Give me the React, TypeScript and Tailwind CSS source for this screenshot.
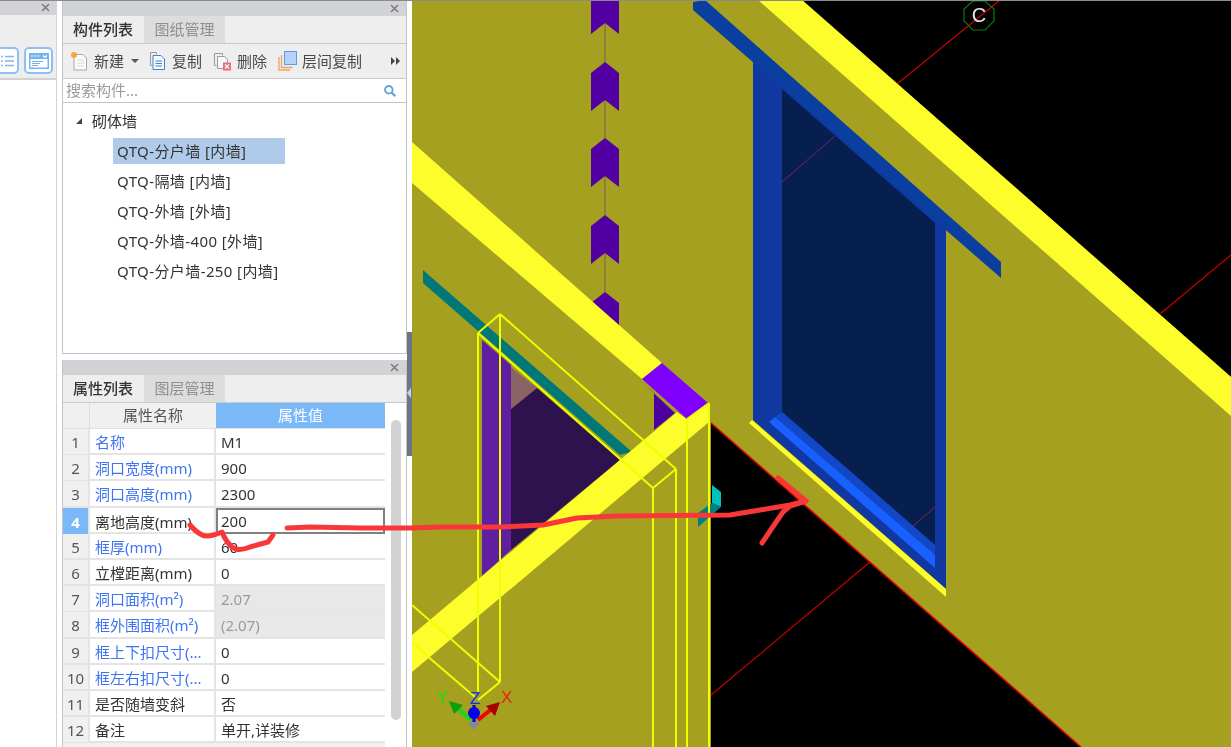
import React from 'react';

const rows = [
  { name: '名称', value: 'M1', blue: true },
  { name: '洞口宽度(mm)', value: '900', blue: true },
  { name: '洞口高度(mm)', value: '2300', blue: true },
  { name: '离地高度(mm)', value: '200', blue: false, active: true },
  { name: '框厚(mm)', value: '60', blue: true },
  { name: '立樘距离(mm)', value: '0', blue: false },
  { name: '洞口面积(m²)', value: '2.07', blue: true, locked: true },
  { name: '框外围面积(m²)', value: '(2.07)', blue: true, locked: true },
  { name: '框上下扣尺寸(...', value: '0', blue: true },
  { name: '框左右扣尺寸(...', value: '0', blue: true },
  { name: '是否随墙变斜', value: '否', blue: false },
  { name: '备注', value: '单开,详装修', blue: false },
];

const treeItems = ['QTQ-隔墙 [内墙]', 'QTQ-外墙 [外墙]', 'QTQ-外墙-400 [外墙]', 'QTQ-分户墙-250 [内墙]'];

const CloseX = () => (
  <svg width="9" height="9" viewBox="0 0 9 9" className="shrink-0">
    <path d="M1 1l7 7M8 1l-7 7" stroke="#7d7d7d" strokeWidth="1.6" />
  </svg>
);

const PanelHeader = () => (
  <div className="h-[15px] shrink-0 bg-[#d2d3d7] flex items-center justify-end pr-[7px]">
    <CloseX />
  </div>
);

const Tabs = ({ active, other }: { active: string; other: string }) => (
  <div className="h-[28px] shrink-0 bg-[#eeeeee] flex border-b border-[#c9c9cc]">
    <div className="w-[81px] pl-[10px] flex items-center text-[15px] font-medium text-[#333333]">{active}</div>
    <div className="w-[81px] flex items-center justify-center text-[15px] text-[#8f8f8f] bg-[#dddddd]">{other}</div>
  </div>
);

const NewIcon = () => (
  <svg width="20" height="20" viewBox="0 0 20 20" className="shrink-0">
    <path d="M4 3.500h9l3.500 3.500v12H4z" fill="#fafafa" stroke="#a9a9a9" />
    <path d="M7 9h7M7 12h7M7 15h7" stroke="#d8d8d8" />
    <circle cx="4" cy="4" r="3" fill="#f6a63c" />
  </svg>
);

const CopyIcon = () => (
  <svg width="18" height="20" viewBox="0 0 18 20" className="shrink-0">
    <path d="M1.500 1.500h6v2" fill="none" stroke="#9a9a9a" />
    <path d="M1.500 1.500v13h2" fill="none" stroke="#9a9a9a" />
    <path d="M4 4.500h8l3.500 3.500v10.500H4z" fill="#f4f9ff" stroke="#3f86cf" />
    <path d="M6.500 10h6.500M6.500 12.500h6.500M6.500 15h6.500" stroke="#3f86cf" />
  </svg>
);

const DeleteIcon = () => (
  <svg width="20" height="20" viewBox="0 0 20 20" className="shrink-0">
    <path d="M1.500 2.500h8v2M1.500 2.500v12h2" fill="none" stroke="#9a9a9a" />
    <path d="M4.500 5.500h7l3 3v9h-10z" fill="#f7f7f7" stroke="#9a9a9a" />
    <rect x="10" y="11.500" width="8" height="8" fill="#e8707a" />
    <path d="M12 13.500l4 4M16 13.500l-4 4" stroke="#ffffff" strokeWidth="1.200" />
  </svg>
);

const FloorCopyIcon = () => (
  <svg width="20" height="20" viewBox="0 0 20 20" className="shrink-0">
    <path d="M1 6v13h11" fill="none" stroke="#f0a468" strokeWidth="1.300" />
    <path d="M3.500 4v12.500h11" fill="none" stroke="#f0a468" strokeWidth="1.300" />
    <rect x="6.500" y="0.500" width="12" height="13" fill="#b6d4fb" stroke="#5a9bec" />
  </svg>
);

const SearchIcon = () => (
  <svg width="14" height="14" viewBox="0 0 14 14">
    <circle cx="5.800" cy="5.800" r="3.800" fill="none" stroke="#5aa6cf" strokeWidth="1.800" />
    <path d="M8.800 8.800l3.500 3.500" stroke="#5aa6cf" strokeWidth="2.200" />
  </svg>
);

const LeftPanel = () => (
  <div className="w-[57px] shrink-0 flex flex-col border-r border-[#d4d4d4]">
    <div className="h-[15px] bg-[#d2d3d7] flex items-center justify-end pr-[6px]">
      <CloseX />
    </div>
    <div className="h-[65px] bg-[#eeeeee] border-b-2 border-[#d2d2d2] flex items-end pb-[4px] gap-[5px] overflow-hidden">
      <div className="w-[20px] h-[27px] -ml-px rounded-r-[5px] border-2 border-l-0 border-[#8dc0f5] bg-white flex items-center justify-center">
        <svg width="14" height="14" viewBox="0 0 14 14">
          <path d="M0 2.500h2M0 7h2M0 11.500h2M4 2.500h9M4 7h9M4 11.500h9" stroke="#7ab6f2" strokeWidth="1.300" />
        </svg>
      </div>
      <div className="w-[29px] h-[27px] rounded-[5px] border-2 border-[#8dc0f5] bg-white flex items-center justify-center">
        <svg width="20" height="16" viewBox="0 0 20 16">
          <rect width="20" height="16" fill="#74b3f2" />
          <rect x="1.500" y="6" width="17" height="8.500" fill="#ffffff" />
          <path d="M2 3h2M5 3h2M8 3h2M14 2.500l2 2 2-2" stroke="#ffffff" strokeWidth="1.200" fill="none" />
          <path d="M3 8.500h11M3 10.500h8M3 12.500h6" stroke="#74b3f2" />
        </svg>
      </div>
    </div>
    <div className="flex-1 bg-white" />
  </div>
);

const ToolItem = ({ icon, label, className }: { icon: React.ReactNode; label: string; className: string }) => (
  <div className={`flex items-center gap-[4px] text-[15px] whitespace-nowrap text-[#4a4a4a] ${className}`}>
    {icon}
    <span>{label}</span>
  </div>
);

const ComponentPanel = () => (
  <div className="h-[353px] shrink-0 flex flex-col border-r border-l border-[#c4c4c8] border-b bg-white">
    <PanelHeader />
    <Tabs active="构件列表" other="图纸管理" />
    <div className="h-[35px] shrink-0 bg-[#eeeeee] border-b border-[#c9c9cc] flex items-center pl-[7px] relative">
      <ToolItem icon={<NewIcon />} label="新建" className="w-[61px]" />
      <span className="w-0 h-0 border-x-[4px] border-x-transparent border-t-[4px] border-t-[#555555] mr-[10px]" />
      <ToolItem icon={<CopyIcon />} label="复制" className="w-[64px] gap-[5px]" />
      <ToolItem icon={<DeleteIcon />} label="删除" className="w-[65px]" />
      <ToolItem icon={<FloorCopyIcon />} label="层间复制" className="" />
      <svg width="10" height="8" viewBox="0 0 10 8" className="absolute right-[5px] top-[13px]">
        <path d="M0 0l4 4-4 4zM5 0l4 4-4 4z" fill="#444444" />
      </svg>
    </div>
    <div className="h-[24px] shrink-0 border-b border-[#c4c4c8] flex items-center justify-between pl-[3px] pr-[9px] text-[15px] text-[#9b9b9b]">
      <span>搜索构件...</span>
      <SearchIcon />
    </div>
    <div className="flex-1 pt-[3px] text-[15px] text-[#333333]">
      <div className="h-[30px] flex items-center pl-[13px]">
        <span className="w-0 h-0 border-l-[6px] border-l-transparent border-b-[6px] border-b-[#444444] mr-[10px]" />
        砌体墙
      </div>
      <div className="ml-[50px] w-[172px] h-[26px] my-[2px] bg-[#b0cbea] flex items-center pl-[4px] tracking-[0.4px]">QTQ-分户墙 [内墙]</div>
      {treeItems.map((item) => (
        <div key={item} className="h-[30px] flex items-center pl-[54px] tracking-[0.4px]">
          {item}
        </div>
      ))}
    </div>
  </div>
);

const PropertyPanel = () => (
  <div className="flex-1 min-h-0 flex flex-col border-l border-r border-[#c4c4c8] overflow-hidden">
    <PanelHeader />
    <Tabs active="属性列表" other="图层管理" />
    <div className="flex-1 flex min-h-0">
      <div className="w-[322px] shrink-0 text-[15px]">
        <div className="h-[26px] grid grid-cols-[27px_126px_169px] border-b border-[#e0e0e0]">
          <div className="bg-[#f0f0f0] border-r border-[#dddddd]" />
          <div className="bg-[#f0f0f0] flex items-center justify-center text-[#555555]">属性名称</div>
          <div className="bg-[#7ab8f8] flex items-center justify-center text-white">属性值</div>
        </div>
        {rows.map((row, i) => (
          <div key={row.name} className="h-[26.2px] grid grid-cols-[27px_126px_169px] border-b-2 border-[#e4e4e4]">
            <div
              className={`flex items-center justify-center pt-[2px] border-r-2 border-[#e4e4e4] ${
                row.active ? 'bg-[#7ab8f8] text-white font-bold' : 'bg-[#f0f0f0] text-[#555555]'
              }`}
            >
              {i + 1}
            </div>
            <div className={`flex items-center pl-[5px] pt-[2px] whitespace-nowrap border-r-2 border-[#e4e4e4] ${row.blue ? 'text-[#3f74f2]' : 'text-[#333333]'}`}>
              {row.name}
            </div>
            <div
              className={`flex items-center ${row.locked ? 'bg-[#e8e8e8] text-[#9a9a9a]' : 'text-[#333333]'} ${
                row.active ? 'border-2 border-[#808080] pl-[3px]' : 'pl-[5px] pt-[2px]'
              }`}
            >
              {row.value}
            </div>
          </div>
        ))}
        <div className="h-[4px] bg-[#f0f0f0]" />
      </div>
      <div className="flex-1 flex justify-center pt-[17px] pl-px">
        <div className="w-[10px] h-[300px] rounded-[5px] bg-[#d2d2d2]" />
      </div>
    </div>
  </div>
);

const chainTips = [-15, 62, 138, 215];

const Scene = () => (
  <svg viewBox="412 0 819 747" width="819" height="747" className="block">
    <rect x="412" y="0" width="819" height="747" fill="#a5a020" />
    {/* black background areas */}
    <polygon points="802,0 1231,377 1231,0" fill="#000000" />
    <polygon points="711,423 1081,747 711,747" fill="#000000" />
    <path d="M1000 0L897 84M1231 255L1160 314M711 695L870 562" stroke="#c80000" strokeWidth="1.200" />
    <path d="M711 423L1081 747" stroke="#e80000" strokeWidth="1.500" />
    <polygon points="758,0 802,0 1231,377 1231,416" fill="#fdfd2c" />
    {/* grid bubble */}
    <polygon points="973,1 985,1 994,9 994,21 985,30 973,30 964,21 964,9" fill="none" stroke="#0a7a14" strokeWidth="1.200" />
    <text x="979" y="22" textAnchor="middle" fontSize="20" fill="#e8e8e8" fontFamily="Liberation Sans, sans-serif">C</text>
    {/* window on the right */}
    <polygon points="753,58 946,228 946,589 753,420" fill="#1038a0" />
    <polygon points="782,89 935,223 935,545 782,412" fill="#071f4f" />
    <path d="M782 182L835 136M913 526L935 507" stroke="#7a2458" strokeWidth="1" />
    <polygon points="782,412 775,417 935,555 935,545" fill="#1248c8" />
    <polygon points="769,422 775,417 935,555 935,568" fill="#1860ff" />
    <polygon points="693,2 705,0 1001,262 1001,278 693,10" fill="#0a3fa0" />
    <polygon points="749,423 752,420 946,589 946,597" fill="#fdfd2c" />
    {/* chain of arrows */}
    <path d="M605 0V292" stroke="#8c7048" strokeWidth="1.500" />
    {chainTips.map((tip) => (
      <polygon
        key={tip}
        points={`605,${tip} 619,${tip + 11} 619,${tip + 49} 605,${tip + 38} 591,${tip + 49} 591,${tip + 11}`}
        fill="#5200a3"
      />
    ))}
    <polygon points="605,292 619,303 619,330 591,330 591,303" fill="#5200a3" />
    {/* door on the left */}
    <polygon points="423,270 423,283 620,455 632,452" fill="#007878" />
    <polygon points="482,340 511,365 511,550 482,576" fill="#5f1fa0" />
    <polygon points="511,367 537,388 511,409" fill="#8a6464" />
    <polygon points="511,409 537,388 620,460 511,550" fill="#2e124e" />
    <polygon points="654,393 642,382 675,413 654,430" fill="#4d00a0" />
    <polygon points="700,413 708,405 708,421" fill="#4d00a0" />
    <polygon points="712,485 721,492 721,507 712,503" fill="#00c0c0" />
    <polygon points="698,513 712,503 721,507 698,527" fill="#007f80" />
    <polygon points="412,142 662,363 642,379 412,183" fill="#fdfd2c" />
    <polygon points="412,635 677,412 687,419 709,404 709,422 412,672" fill="#fdfd2c" />
    <polygon points="642,379 662,363 708,403 687,419" fill="#8000ff" />
    <g stroke="#eeff00" strokeWidth="2" fill="none">
      <path d="M478 333V692M500 314V682M478 333L500 314M500 314L676 469M478 333L653 488M676 469L653 488" />
      <path d="M653 488V747M676 469V747M687 419V747M709 403V747M687 419L709 403" />
      <path d="M412 605L500 682M412 643L475 697M500 682L478 700" />
    </g>
    {/* axis gizmo */}
    <polygon points="474,718 480,724 474,730 468,724" fill="#8a8a8a" />
    <path d="M471 720L456 707" stroke="#18d818" strokeWidth="4" />
    <polygon points="449,701 463,705 454,714" fill="#109c10" />
    <path d="M478 720L494 707" stroke="#f00000" strokeWidth="4" />
    <polygon points="500,702 495,716 486,706" fill="#a80000" />
    <path d="M474 705V722" stroke="#0000e0" strokeWidth="3" />
    <circle cx="474" cy="713" r="6" fill="#0a00f0" />
    <g fontSize="17" fontFamily="Liberation Sans, sans-serif">
      <text x="437" y="703" fill="#18e018">Y</text>
      <text x="470" y="704" fill="#1030f0">Z</text>
      <text x="501" y="703" fill="#f02010">X</text>
    </g>
  </svg>
);

export default function App() {
  return (
    <div className='relative w-[1231px] h-[747px] overflow-hidden bg-white flex blur-[0.35px] font-["Noto_Sans","Noto_Sans_CJK_SC",sans-serif]'>
      <div className="absolute left-0 right-0 top-0 h-px bg-[#8a8a8a] z-10" />
      <LeftPanel />
      <div className="w-[5px] shrink-0" />
      <div className="w-[345px] shrink-0 flex flex-col gap-[6px] pt-px">
        <ComponentPanel />
        <PropertyPanel />
      </div>
      <div className="w-[5px] shrink-0 pt-[332px]">
        <div className="relative h-[124px] bg-[#6b7785]">
          <span className="absolute left-0 top-[56px] w-0 h-0 border-y-[5px] border-y-transparent border-r-[4px] border-r-[#d0d4d8]" />
        </div>
      </div>
      <div className="flex-1 min-w-0">
        <Scene />
      </div>
      {/* hand-drawn red annotation */}
      <svg className="absolute left-0 top-0 pointer-events-none" width="1231" height="747" viewBox="0 0 1231 747">
        <g fill="none" stroke="#f83838" strokeWidth="5" strokeLinecap="round" strokeLinejoin="round">
          <path d="M190 525Q196 532 202 535T222 532Q226 542 232 547T250 547L268 542L273 535" />
          <path d="M287 528L310 527L360 528L412 528L440 527L500 527L543 525L577 518L617 516L730 515L760 510L790 505L806 501" />
          <path d="M778 478L788 486L806 501L790 506L783 512L772 528L762 543" />
        </g>
      </svg>
    </div>
  );
}
